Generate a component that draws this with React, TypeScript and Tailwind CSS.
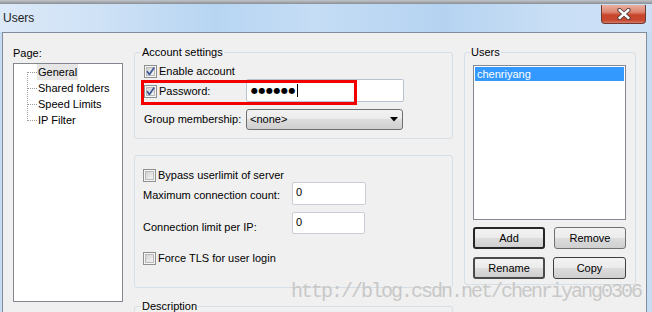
import React from "react";

const Check = ({ checked }: { checked?: boolean }) => (
  <svg width="13" height="13" viewBox="0 0 13 13" className="shrink-0">
    <defs>
      <linearGradient id="cbfill" x1="0" y1="0" x2="1" y2="1">
        <stop offset="0" stopColor="#cfcfcf" />
        <stop offset="1" stopColor="#f7f7f7" />
      </linearGradient>
    </defs>
    <rect x="0.5" y="0.5" width="12" height="12" fill="#f6f6f6" stroke="#8e8f8f" />
    <rect x="2.5" y="2.5" width="8" height="8" fill="url(#cbfill)" stroke="#b9b9b9" />
    {checked && (
      <path d="M3 6.2 L5.4 9.4 L10.2 2.6" stroke="#3d5a98" strokeWidth="1.7" fill="none" strokeLinejoin="round" />
    )}
  </svg>
);

const Btn = ({ label, cls }: { label: string; cls: string }) => (
  <div
    className={`h-[22px] w-[72px] rounded-[3px] flex items-center justify-center bg-[linear-gradient(#f2f2f2_0%,#ebebeb_50%,#dddddd_50%,#cfcfcf_100%)] ${cls}`}
  >
    {label}
  </div>
);

export default function App() {
  return (
    <div className="w-[652px] h-[312px] overflow-hidden relative flex flex-col font-['Liberation_Sans',Arial,sans-serif] text-[11px] text-black">
      <div className="h-[4px] shrink-0 bg-[linear-gradient(#c2c4c7,#8a8f96)]" />
      <div className="h-[28px] shrink-0 flex items-start justify-between bg-[linear-gradient(90deg,#dce9f8_0%,#cfe2f6_15%,#b7d5f2_33%,#c5ddf5_48%,#b5d3f1_68%,#c9dff5_85%,#cde1f6_100%)]">
        <span className="self-center pl-[3px] text-[12px] leading-[16px] text-[#1e1e1e]">Users</span>
        <div className="mt-[1px] mr-[6px] w-[45px] h-[19px] rounded-b-[4px] border border-t-0 border-[#6c3b33] bg-[linear-gradient(#eab0a2_0%,#dd8370_40%,#c8452b_55%,#c84a30_85%,#d87a66_100%)] flex items-center justify-center">
          <svg width="16" height="12" viewBox="0 0 16 12">
            <path d="M3.5 2 L12.5 10 M12.5 2 L3.5 10" stroke="#4a3a38" strokeWidth="4.2" strokeLinecap="round" />
            <path d="M3.5 2 L12.5 10 M12.5 2 L3.5 10" stroke="#ffffff" strokeWidth="2.4" strokeLinecap="round" />
          </svg>
        </div>
      </div>
      <div className="flex-1 min-h-0 flex bg-[#c6dcf2] overflow-hidden">
        <div className="w-[2px] shrink-0" />
        <div className="w-[645px] shrink-0 border-l border-t border-r border-[#7f8d9c] bg-[#f0f0f0] flex items-start pl-[10px]">
          {/* Left column */}
          <div className="w-[110px] shrink-0 pt-[12px] flex flex-col">
            <div className="h-[16px] leading-[16px]">Page:</div>
            <div className="mt-[2px] h-[239px] border border-[#828790] bg-white relative">
              <div className="absolute left-[13px] top-[8px] h-[49px] border-l border-dotted border-[#9a9a9a]" />
              {["General", "Shared folders", "Speed Limits", "IP Filter"].map((t, i) => (
                <div key={t} className="h-[16px] flex items-center pl-[14px]">
                  <div className="w-[9px] h-0 border-t border-dotted border-[#9a9a9a]" />
                  <span className={`px-[1px] h-[16px] leading-[16px] ${i === 0 ? "bg-[#e6e6e6]" : ""}`}>{t}</span>
                </div>
              ))}
            </div>
          </div>

          {/* Middle column */}
          <div className="ml-[11px] w-[319px] shrink-0 pt-[11px] flex flex-col">
            <fieldset className="h-[95px] shrink-0 border border-[#d5dfe5] rounded-[3px]">
              <legend className="ml-[6px] px-[1px] leading-[16px]">Account settings</legend>
              <div className="pl-[9px] pt-[3px] flex flex-col">
                <div className="h-[16px] flex items-center gap-[2px]">
                  <Check checked />
                  <span>Enable account</span>
                </div>
                <div className="h-[24px] flex items-center relative">
                  <div className="w-[102px] flex items-center gap-[2px]">
                    <Check checked />
                    <span>Password:</span>
                  </div>
                  <div className="w-[158px] h-[23px] border border-[#b7c3d0] rounded-[2px] bg-white flex items-center pl-[4px] self-start">
                    <span className="font-['DejaVu_Sans',sans-serif] text-[8px] tracking-[0.5px] leading-[12px]">●●●●●●</span>
                    <div className="w-[1px] h-[13px] bg-black ml-[1px]" />
                  </div>
                  <div className="absolute left-[-3px] top-[1px] w-[216px] h-[25px] border-[3px] border-[#f20000]" />
                </div>
                <div className="mt-[6px] h-[21px] flex items-center">
                  <div className="w-[102px]">Group membership:</div>
                  <div className="w-[157px] h-[21px] border border-[#707070] rounded-[3px] bg-[linear-gradient(#f2f2f2_0%,#ebebeb_50%,#dddddd_50%,#cfcfcf_100%)] flex items-center justify-between pl-[3px] pr-[4px]">
                    <span>&lt;none&gt;</span>
                    <svg width="8" height="5" viewBox="0 0 8 5">
                      <path d="M0 0 H8 L4 4.5 Z" fill="#000" />
                    </svg>
                  </div>
                </div>
              </div>
            </fieldset>

            <div className="mt-[16px] h-[133px] shrink-0 border border-[#d5dfe5] rounded-[3px] pl-[8px] flex flex-col">
              <div className="mt-[12px] h-[14px] flex items-center gap-[2px]">
                <Check />
                <span>Bypass userlimit of server</span>
              </div>
              <div className="h-[23px] flex items-start">
                <div className="w-[149px] pt-[5px] leading-[16px]">Maximum connection count:</div>
                <div className="w-[74px] h-[23px] border border-[#c9ced6] rounded-[2px] bg-white pl-[3px] pt-[1px] leading-[16px]">0</div>
              </div>
              <div className="mt-[7px] h-[22px] flex items-start">
                <div className="w-[149px] pt-[7px] leading-[16px]">Connection limit per IP:</div>
                <div className="w-[73px] h-[22px] border border-[#c9ced6] rounded-[2px] bg-white pl-[3px] pt-[1px] leading-[16px]">0</div>
              </div>
              <div className="mt-[17px] h-[14px] flex items-center gap-[2px]">
                <Check />
                <span>Force TLS for user login</span>
              </div>
            </div>

            <fieldset className="mt-[10px] h-[40px] shrink-0 border border-[#d5dfe5] rounded-[3px]">
              <legend className="ml-[6px] px-[1px] leading-[16px]">Description</legend>
            </fieldset>
          </div>

          {/* Right column */}
          <div className="ml-[11px] w-[172px] shrink-0 pt-[11px]">
            <fieldset className="h-[241px] border border-[#d5dfe5] rounded-[3px]">
              <legend className="ml-[5px] px-[1px] leading-[16px]">Users</legend>
              <div className="pl-[8px] pt-[5px]">
                <div className="w-[153px] h-[155px] border border-[#828790] bg-white p-[1px]">
                  <div className="h-[14px] leading-[14px] bg-[#3399ff] text-white pl-[2px]">chenriyang</div>
                </div>
                <div className="mt-[7px] flex gap-[9px]">
                  <Btn label="Add" cls="border-2 border-[#262626]" />
                  <Btn label="Remove" cls="border border-[#707070]" />
                </div>
                <div className="mt-[8px] flex gap-[8px]">
                  <Btn label="Rename" cls="border-2 border-[#4a4a4a]" />
                  <Btn label="Copy" cls="w-[73px] border border-[#3f3f3f]" />
                </div>
              </div>
            </fieldset>
          </div>
        </div>
        <div className="w-[5px] shrink-0" />
      </div>

      <div className="absolute left-[291px] top-[282px] font-['Liberation_Mono',monospace] text-[20px] leading-[20px] tracking-[-2px] text-[#c8c8c8] whitespace-nowrap pointer-events-none">
        http://blog.csdn.net/chenriyang0306
      </div>
    </div>
  );
}
